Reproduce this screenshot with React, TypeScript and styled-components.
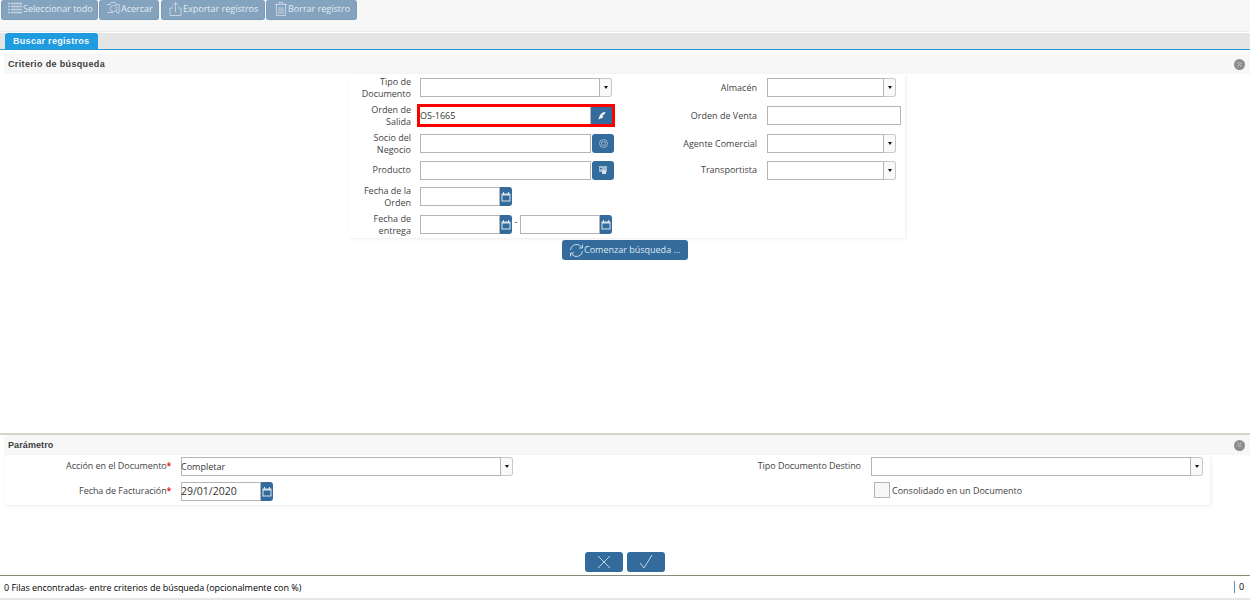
import React from "react";
import styled, { createGlobalStyle } from "styled-components";

const Global = createGlobalStyle`
  html, body { margin: 0; padding: 0; background: #fff; }
  body { font-family: "Open Sans", "Noto Sans", sans-serif; font-size: 9px; color: #333; }
  * { box-sizing: border-box; }
`;

const Page = styled.div`
  width: 1250px; height: 600px; display: flex; flex-direction: column; overflow: hidden; background: #fff;
`;
const Toolbar = styled.div`
  height: 32px; flex: none; background: #f7f7f7; display: flex; align-items: flex-start; padding-left: 1px; border-bottom: 1px solid #ececec;
`;
const ToolButton = styled.div<{ $w: number; $ml?: number; $pl?: number }>`
  width: ${(p) => p.$w}px; height: 20px; margin-left: ${(p) => p.$ml ?? 0}px; background: #84a3bf; border-radius: 3px; border: 1px solid #7b9ab6; border-top: 0;
  color: #e4ebf1; font-size: 9px; display: flex; align-items: center; padding: 0 0 2px ${(p) => p.$pl ?? 6}px; gap: 1px; white-space: nowrap; flex: none;
  svg { flex: none; opacity: .75; }
`;
const TabStrip = styled.div`
  height: 17px; flex: none; background: #e5e5e5; border-bottom: 1px solid #2a97d4; padding-left: 5px; margin-top: 1px; display: flex;
`;
const Tab = styled.div`
  width: 93px; height: 16px; background: #1f9be0; border-radius: 3px 3px 0 0; color: #f2f8fc;
  font: bold 9px "Liberation Sans", Arial, sans-serif; letter-spacing: 0.3px; padding-left: 8px; display: flex; align-items: center;
`;
const SectionHead = styled.div<{ $top: number; $ls: number }>`
  height: 20px; flex: none; margin: ${(p) => p.$top}px 0 0 4px; background: #f7f7f7; display: flex; align-items: center; justify-content: space-between;
  padding: 0 5px 0 4px; font: bold 9px "Liberation Sans", Arial, sans-serif; letter-spacing: ${(p) => p.$ls}px; color: #3d3d3d;
`;
const Collapse = styled.span`
  width: 11px; height: 11px; border-radius: 50%; background: #8d8d8d; color: #c9c9c9; display: flex; align-items: center; justify-content: center;
`;
const SearchPanel = styled.div`
  width: 556px; margin-left: 349px; height: 164px; flex: none; padding-top: 4px; box-shadow: 1px 1px 3px rgba(0,0,0,.08);
  display: grid; grid-template-columns: 62px 194px 162px 138px;
  grid-template-rows: 28px 28px 27px 26px 28px 23px;
`;
const Label = styled.div`
  font-size: 9px; line-height: 12px; color: #444; text-align: right; height: 19px; display: flex; align-items: center; justify-content: flex-end;
`;
const SingleLabel = styled(Label)`
  height: 18px;
`;
const LeftCell = styled.div`
  padding-left: 9px; display: flex; align-items: flex-start;
`;
const Input = styled.div<{ $w: number; $fs?: number }>`
  width: ${(p) => p.$w}px; height: 19px; border: 1px solid #b5b5b5; background: #fff; flex: none;
  font-size: ${(p) => p.$fs ?? 9}px; line-height: 17px; color: #333; text-indent: -1px; white-space: nowrap;
`;
const DropButton = styled.div`
  width: 12px; height: 19px; flex: none; background: #f9f9f9; border: 1px solid #c8c8c8; border-left: 0; border-radius: 0 3px 3px 0;
  display: flex; align-items: center; justify-content: center;
  &::after { content: ""; border: 2.5px solid transparent; border-top: 3px solid #111; border-bottom: 0; }
`;
const IconButton = styled.div`
  width: 22px; height: 19px; margin-left: 1px; flex: none; background: #336b9c; border-radius: 3px; display: flex; align-items: center; justify-content: center;
`;
const CalButton = styled.div`
  width: 12px; height: 19px; flex: none; background: #336b9c; border-radius: 0 3px 3px 0; display: flex; align-items: center; justify-content: center;
`;
const RedBox = styled.div`
  width: 198px; height: 23px; margin: -2px 0 0 -3px; border: 3px solid #f00; display: flex; align-items: center;
`;
const RedInput = styled.div`
  width: 171px; height: 17px; flex: none; font-size: 9px; line-height: 17px; color: #333; border-right: 1px solid #b5b5b5;
`;
const RedButton = styled.div`
  width: 21px; height: 17px; flex: none; background: #336b9c; display: flex; align-items: center; justify-content: center;
`;
const Dash = styled.span`
  width: 8px; text-align: center; flex: none; font-size: 9px; line-height: 14px;
`;
const RightLabel = styled(Label)`
  padding: 1px 10px 0 0;
`;
const TransportLabel = styled(SingleLabel)`
  padding-right: 10px;
`;
const SearchButtonRow = styled.div`
  flex: none; display: flex; padding: 2px 0 0 562px;
`;
const SearchButton = styled.div`
  width: 126px; height: 20px; background: #336b9c; border-radius: 3px; color: #dfe8f0; font-size: 9px; display: flex; align-items: center; padding: 0 0 2px 7px;
  svg { margin-top: 2px; }
`;
const Spacer = styled.div`
  flex: 1;
`;
const Gap = styled.div`
  height: 47px; flex: none;
`;
const Rule = styled.div`
  height: 2px; flex: none; background: #d4d4cc;
`;
const ParamPanel = styled.div`
  width: 1206px; margin-left: 4px; height: 50px; flex: none; box-shadow: 1px 1px 3px rgba(0,0,0,.08); padding-top: 2px;
  display: grid; grid-template-columns: 167px 342px 348px 1fr; grid-template-rows: 25px 23px;
`;
const ParamLabel = styled(SingleLabel)`
  letter-spacing: -0.05px;
`;
const Req = styled.span`
  color: #f01818; font-weight: 700; font-size: 8px;
`;
const CheckRow = styled.div`
  padding-left: 13px; display: flex; align-items: center; gap: 2px; height: 16px; font-size: 9px; color: #444;
`;
const Check = styled.span`
  width: 16px; height: 16px; border: 1px solid #b5b5b5; background: #f7f7f7; flex: none;
`;
const Actions = styled.div`
  height: 20px; flex: none; display: flex; gap: 4px; padding-left: 585px; margin-bottom: 3px;
`;
const ActionButton = styled.div`
  width: 38px; height: 20px; background: #336b9c; border-radius: 3px; display: flex; align-items: center; justify-content: center;
`;
const StatusBar = styled.div`
  height: 25px; flex: none; border-top: 1px solid #8a8a78; border-bottom: 2px solid #e6e6e6; display: flex; align-items: center; justify-content: space-between;
  padding: 0 5px 0 4px; font-size: 9px; font-weight: 400; letter-spacing: -0.04px; color: #000;
`;
const Count = styled.span`
  border-left: 1px solid #5b8fc0; padding-left: 4px; line-height: 12px; width: 11px;
`;
const FieldWrap = styled.div<{ $pl?: number }>`
  display: flex; align-items: flex-start; padding-left: ${(p) => p.$pl ?? 0}px;
`;

const Cal = () => (
  <svg width="10" height="10" viewBox="0 0 10 10" fill="none">
    <rect x=".5" y="1.5" width="9" height="8" fill="#dce6ee" />
    <rect x="1.5" y="3.5" width="7" height="5" fill="#336b9c" />
    <path d="M2.5 0v2M7.5 0v2" stroke="#dce6ee" />
  </svg>
);
const Stroke = { fill: "none", stroke: "#dfe6ec", strokeWidth: 1 } as const;

const ListIcon = () => (
  <svg width="14" height="13" viewBox="0 0 14 13" {...Stroke}>
    <path d="M0 1.5h2M0 4.5h2M0 7.5h2M0 10.5h2M3 1.5h11M3 4.5h11M3 7.5h11M3 10.5h11" strokeWidth="1.6" />
  </svg>
);
const ZoomIcon = () => (
  <svg width="14" height="13" viewBox="0 0 14 13" {...Stroke}>
    <path d="M1 2.5h3l1-2h4l1 2h3v8h-2M7 10.5H1z" />
    <circle cx="7.5" cy="6.5" r="3.2" />
    <path d="M10 9l2.5 3" />
  </svg>
);
const ExportIcon = () => (
  <svg width="13" height="14" viewBox="0 0 13 14" {...Stroke}>
    <path d="M4 6H1v7.5h11V6H9M6.5 10V1M3.5 3.5l3-3 3 3" />
  </svg>
);
const TrashIcon = () => (
  <svg width="12" height="14" viewBox="0 0 12 14" {...Stroke}>
    <path d="M0 2.5h12M4 2.5V.5h4v2M1.5 3v10.5h9V3M4 5v7M6 5v7M8 5v7" />
  </svg>
);
const Refresh = () => (
  <svg width="15" height="15" viewBox="0 0 15 15" fill="none" stroke="#c9d6e2" strokeWidth="1">
    <path d="M1.5 7a6 6 0 0 1 10.5-3.5L13.5 5M13.5 1.5V5H10M13.5 8a6 6 0 0 1-10.5 3.5L1.5 10M1.5 13.5V10H5" />
  </svg>
);
const FeatherIcon = () => (
  <svg width="8" height="9" viewBox="0 0 8 9">
    <path d="M7.5 1C4.5 1 2 3 1.2 6L.5 8.500 2.500 7.500C4.500 7.500 5 6.500 5.200 5L3.800 4.500C5.500 4.500 6.800 3 7.500 1z" fill="#f4f7fa" />
  </svg>
);
const PartnerIcon = () => (
  <svg width="9" height="9" viewBox="0 0 9 9" fill="none" stroke="#9db8d0" strokeWidth="1">
    <circle cx="4.500" cy="4.500" r="4" />
    <circle cx="4.500" cy="4.500" r="2" />
  </svg>
);
const ProductIcon = () => (
  <svg width="8" height="9" viewBox="0 0 8 9">
    <rect x="0" y="0" width="8" height="6" fill="#9fbad0" />
    <rect x="3" y="4" width="4" height="4" fill="#d4e0ea" />
    <rect x="1" y="2" width="2" height="1" fill="#336b9c" />
  </svg>
);
const Chevrons = ({ up }: { up?: boolean }) => (
  <svg width="5" height="6" viewBox="0 0 5 6" fill="none" stroke="#c9c9c9" strokeWidth="1" transform={up ? "rotate(180)" : undefined}>
    <path d="M.5 .5L2.500 2.500L4.500 .5M.5 3L2.500 5L4.500 3" />
  </svg>
);

export default function App() {
  return (
    <Page>
      <Global />
      <Toolbar>
        <ToolButton $w={97}><ListIcon />Seleccionar todo</ToolButton>
        <ToolButton $w={60} $ml={1}><ZoomIcon />Acercar</ToolButton>
        <ToolButton $w={104} $ml={2} $pl={7}><ExportIcon />Exportar registros</ToolButton>
        <ToolButton $w={91} $ml={1} $pl={8}><TrashIcon />Borrar registro</ToolButton>
      </Toolbar>
      <TabStrip><Tab>Buscar registros</Tab></TabStrip>
      <SectionHead $top={4} $ls={0.35}>Criterio de búsqueda<Collapse><Chevrons up /></Collapse></SectionHead>
      <SearchPanel>
        <Label>Tipo de<br />Documento</Label>
        <LeftCell><Input $w={180} /><DropButton /></LeftCell>
        <RightLabel>Almacén</RightLabel>
        <FieldWrap><Input $w={117} /><DropButton /></FieldWrap>

        <Label>Orden de<br />Salida</Label>
        <LeftCell>
          <RedBox>
            <RedInput>OS-1665</RedInput>
            <RedButton><FeatherIcon /></RedButton>
          </RedBox>
        </LeftCell>
        <RightLabel>Orden de Venta</RightLabel>
        <FieldWrap><Input $w={134} /></FieldWrap>

        <Label>Socio del<br />Negocio</Label>
        <LeftCell><Input $w={171} /><IconButton><PartnerIcon /></IconButton></LeftCell>
        <RightLabel>Agente Comercial</RightLabel>
        <FieldWrap><Input $w={117} /><DropButton /></FieldWrap>

        <SingleLabel>Producto</SingleLabel>
        <LeftCell><Input $w={171} /><IconButton><ProductIcon /></IconButton></LeftCell>
        <TransportLabel>Transportista</TransportLabel>
        <FieldWrap><Input $w={117} /><DropButton /></FieldWrap>

        <Label>Fecha de la<br />Orden</Label>
        <LeftCell><Input $w={80} /><CalButton><Cal /></CalButton></LeftCell>
        <span /><span />

        <Label>Fecha de<br />entrega</Label>
        <LeftCell>
          <Input $w={80} /><CalButton><Cal /></CalButton>
          <Dash>-</Dash>
          <Input $w={80} /><CalButton><Cal /></CalButton>
        </LeftCell>
        <span /><span />
      </SearchPanel>
      <SearchButtonRow>
        <SearchButton><Refresh />Comenzar búsqueda ...</SearchButton>
      </SearchButtonRow>
      <Spacer />
      <Rule />
      <SectionHead $top={0} $ls={0.1}>Parámetro<Collapse><Chevrons /></Collapse></SectionHead>
      <ParamPanel>
        <ParamLabel>Acción en el Documento<Req>*</Req></ParamLabel>
        <FieldWrap $pl={10}><Input $w={320}>Completar</Input><DropButton /></FieldWrap>
        <ParamLabel>Tipo Documento Destino</ParamLabel>
        <FieldWrap $pl={10}><Input $w={320} /><DropButton /></FieldWrap>

        <ParamLabel>Fecha de Facturación<Req>*</Req></ParamLabel>
        <FieldWrap $pl={10}><Input $w={80} $fs={10.5}>29/01/2020</Input><CalButton><Cal /></CalButton></FieldWrap>
        <span />
        <CheckRow><Check />Consolidado en un Documento</CheckRow>
      </ParamPanel>
      <Gap />
      <Actions>
        <ActionButton>
          <svg width="14" height="14" viewBox="0 0 14 14" fill="none" stroke="#c3d3e1"><path d="M1 1l12 12M13 1L1 13" /></svg>
        </ActionButton>
        <ActionButton>
          <svg width="14" height="14" viewBox="0 0 14 14" fill="none" stroke="#c3d3e1"><path d="M1 8l4 5 8-13" /></svg>
        </ActionButton>
      </Actions>
      <StatusBar>
        <span>0 Filas encontradas- entre criterios de búsqueda (opcionalmente con %)</span>
        <Count>0</Count>
      </StatusBar>
    </Page>
  );
}
